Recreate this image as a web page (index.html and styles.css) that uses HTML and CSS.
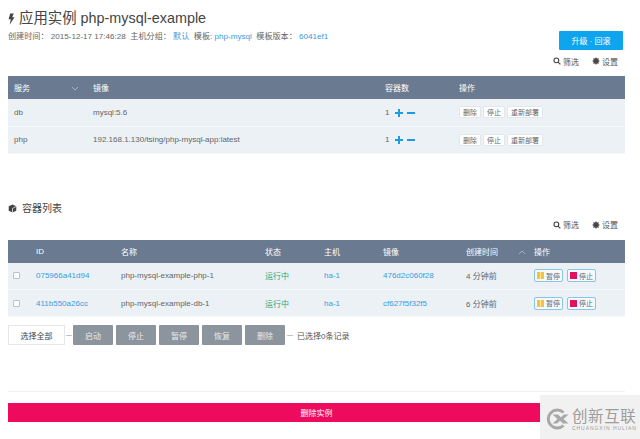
FILE: index.html
```html
<!DOCTYPE html>
<html lang="en">
<head>
    <meta charset="UTF-8">
    <title>应用实例 php-mysql-example</title>
    <link rel="stylesheet" href="styles.css">
</head>
<body>
    <div class="page">
        <div class="head">
            <div>
                <h1 class="title">
                    <svg class="bolt" viewBox="0 0 7 12"><path d="M2.2 0.5h3.6L4.2 4.3h2.3L1.6 11.8l1.2-5.6H0.6z"/></svg>
                    应用实例 php-mysql-example
                </h1>
                <p class="meta">创建时间： 2015-12-17 17:46:28&nbsp; 主机分组： <a>默认</a>&nbsp; 模板: <a>php-mysql</a>&nbsp; 模板版本： <a>6041ef1</a></p>
            </div>
            <button class="upgrade">升级 · 回滚</button>
        </div>

        <div class="tools tools-first">
            <span class="tool"><svg viewBox="0 0 10 10"><circle cx="4.2" cy="4.2" r="3" /><path d="M6.4 6.4L9.2 9.2"/></svg>筛选</span>
            <span class="tool"><svg viewBox="0 0 10 10"><circle cx="5" cy="5" r="2.6" class="gear"/><path d="M5 .6v2M5 7.4v2M.6 5h2M7.4 5h2M1.9 1.9l1.4 1.4M6.7 6.7l1.4 1.4M1.9 8.1l1.4-1.4M6.7 3.3l1.4-1.4"/></svg>设置</span>
        </div>

        <table class="grid services">
            <thead>
                <tr>
                    <th class="c-svc">服务<svg class="chev" viewBox="0 0 10 6"><path d="M1 1l4 4 4-4"/></svg></th>
                    <th class="c-img">镜像</th>
                    <th class="c-num">容器数</th>
                    <th>操作</th>
                </tr>
            </thead>
            <tbody>
                <tr>
                    <td>db</td>
                    <td>mysql:5.6</td>
                    <td class="scale">1 <span class="pm plus"></span><span class="pm"></span></td>
                    <td><span class="mini">删除</span><span class="mini">停止</span><span class="mini">重新部署</span></td>
                </tr>
                <tr>
                    <td>php</td>
                    <td>192.168.1.130/tsing/php-mysql-app:latest</td>
                    <td class="scale">1 <span class="pm plus"></span><span class="pm"></span></td>
                    <td><span class="mini">删除</span><span class="mini">停止</span><span class="mini">重新部署</span></td>
                </tr>
            </tbody>
        </table>

        <h2 class="section">
            <svg class="cube" viewBox="0 0 10 10"><path d="M5 .5L9.2 2.6V7.4L5 9.5.8 7.4V2.6z"/><path class="cube-cut" d="M5 5L9.2 2.6M5 5V9.5"/></svg>
            容器列表
        </h2>

        <div class="tools">
            <span class="tool"><svg viewBox="0 0 10 10"><circle cx="4.2" cy="4.2" r="3" /><path d="M6.4 6.4L9.2 9.2"/></svg>筛选</span>
            <span class="tool"><svg viewBox="0 0 10 10"><circle cx="5" cy="5" r="2.6" class="gear"/><path d="M5 .6v2M5 7.4v2M.6 5h2M7.4 5h2M1.9 1.9l1.4 1.4M6.7 6.7l1.4 1.4M1.9 8.1l1.4-1.4M6.7 3.3l1.4-1.4"/></svg>设置</span>
        </div>

        <table class="grid containers">
            <thead>
                <tr>
                    <th class="k-check"></th>
                    <th class="k-id">ID</th>
                    <th class="k-name">名称</th>
                    <th class="k-state">状态</th>
                    <th class="k-host">主机</th>
                    <th class="k-img">镜像</th>
                    <th class="k-time">创建时间<svg class="chev" viewBox="0 0 10 6"><path d="M1 5l4-4 4 4"/></svg></th>
                    <th>操作</th>
                </tr>
            </thead>
            <tbody>
                <tr>
                    <td><span class="check"></span></td>
                    <td><a>075966a41d94</a></td>
                    <td>php-mysql-example-php-1</td>
                    <td class="running">运行中</td>
                    <td><a>ha-1</a></td>
                    <td><a>476d2c060f28</a></td>
                    <td>4 分钟前</td>
                    <td><span class="act"><i class="pause"></i>暂停</span><span class="act"><i class="stop"></i>停止</span></td>
                </tr>
                <tr>
                    <td><span class="check"></span></td>
                    <td><a>411b550a26cc</a></td>
                    <td>php-mysql-example-db-1</td>
                    <td class="running">运行中</td>
                    <td><a>ha-1</a></td>
                    <td><a>cf627f5f32f5</a></td>
                    <td>6 分钟前</td>
                    <td><span class="act"><i class="pause"></i>暂停</span><span class="act"><i class="stop"></i>停止</span></td>
                </tr>
            </tbody>
        </table>

        <div class="bulk">
            <button class="select-all">选择全部</button>
            <span class="dash">—</span>
            <button class="gray">启动</button>
            <button class="gray">停止</button>
            <button class="gray">暂停</button>
            <button class="gray">恢复</button>
            <button class="gray">删除</button>
            <span class="dash">—</span>
            <span class="count">已选择0条记录</span>
        </div>

        <div class="danger-wrap">
            <button class="danger">删除实例</button>
        </div>
    </div>

    <div class="mark">
        <svg class="mark-logo" viewBox="0 0 26 22"><path d="M20 4.5A9 9 0 1 0 20 17.5" /><path d="M9 6.5l5 4.5-5 4.5h4.5l3-2.8 3 2.8H25l-5-4.5 5-4.5h-4.5l-3 2.8-3-2.8z" class="mark-x"/></svg>
        <div class="mark-text">
            <span class="mark-cn">创新互联</span>
            <span class="mark-en">CHUANGXIN HULIAN</span>
        </div>
    </div>
</body>
</html>
```

FILE: styles.css
```css
* {
    box-sizing: border-box;
}
body {
    margin: 0;
    background: #FFFFFF;
    color: #555;
    font-family: "Liberation Sans", "Noto Sans CJK SC", sans-serif;
    font-size: 8px;
    height: 439px;
    overflow: hidden;
    position: relative;
}
a {
    color: #3C9BDC;
}
button {
    font-family: inherit;
    border: none;
}
.page {
    padding: 10px 15px 0 8px;
}
.head {
    display: flex;
    justify-content: space-between;
    align-items: flex-start;
}
.title {
    margin: 0;
    font-size: 14.4px;
    line-height: 17px;
    font-weight: 400;
    color: #444;
    display: flex;
    align-items: center;
    gap: 4px;
}
.bolt {
    width: 7px;
    height: 12px;
    fill: #444;
}
.meta {
    margin: 4px 0 0;
    font-size: 8.1px;
    line-height: 11px;
    color: #666;
}
.upgrade {
    margin: 21px 2px 0 0;
    width: 64px;
    height: 19px;
    background: #0EA5EE;
    color: #fff;
    font-size: 8px;
    border-radius: 1px;
}
.tools {
    display: flex;
    justify-content: flex-end;
    gap: 13px;
    height: 14px;
    align-items: center;
    padding-right: 7px;
    font-size: 8px;
    color: #555;
}
.tools-first {
    margin-top: 4px;
    margin-bottom: 8px;
}
.tool {
    display: flex;
    align-items: center;
    gap: 2px;
}
.tool svg {
    width: 8px;
    height: 8px;
    fill: none;
    stroke: #444;
    stroke-width: 1.4;
}
.tool .gear {
    fill: #444;
}
.grid {
    width: 617px;
    border-collapse: collapse;
    table-layout: fixed;
    font-size: 8px;
}
.grid th {
    background: #6A7A90;
    color: #fff;
    height: 23px;
    padding: 0 0 0 6px;
    text-align: left;
    font-weight: 400;
    white-space: nowrap;
}
.grid td {
    background: #EBF1F5;
    height: 27px;
    padding: 0 0 0 6px;
    border-bottom: 1px solid #F6F8FA;
    white-space: nowrap;
    color: #666;
}
.chev {
    width: 8px;
    height: 5px;
    fill: none;
    stroke: #A9B7C6;
    stroke-width: 1.2;
    margin-left: 38px;
    vertical-align: middle;
}
.c-svc {
    width: 79px;
}
.c-svc .chev {
    margin-left: 41px;
}
.c-img {
    width: 292px;
}
.c-num {
    width: 74px;
}
.pm {
    display: inline-block;
    position: relative;
    width: 8px;
    height: 2px;
    margin-left: 4px;
    vertical-align: middle;
    background: #1E9BE0;
}
.pm.plus {
    margin-left: 3px;
}
.pm.plus::after {
    content: "";
    position: absolute;
    left: 3px;
    top: -3px;
    width: 2px;
    height: 8px;
    background: #1E9BE0;
}
.mini {
    display: inline-block;
    height: 12px;
    line-height: 11px;
    padding: 0 3px;
    margin-right: 2px;
    background: #fff;
    border: 1px solid #E2E7EB;
    border-radius: 1px;
    font-size: 7px;
    color: #666;
}
.section {
    margin: 48px 0 0;
    font-size: 10px;
    font-weight: 400;
    line-height: 14px;
    color: #444;
    display: flex;
    align-items: center;
    gap: 5px;
}
.cube {
    width: 9px;
    height: 9px;
    fill: #444;
}
.cube-cut {
    fill: none;
    stroke: #fff;
    stroke-width: 0.8;
}
.section + .tools {
    margin-top: 2px;
    margin-bottom: 8px;
}
.k-check {
    width: 22px;
}
.k-id {
    width: 85px;
}
.k-name {
    width: 144px;
}
.k-state {
    width: 59px;
}
.k-host {
    width: 59px;
}
.k-img {
    width: 83px;
}
.k-time {
    width: 68px;
}
.k-time .chev {
    margin-left: 20px;
}
.check {
    display: block;
    width: 7px;
    height: 7px;
    margin-left: -1px;
    background: #fff;
    border: 1px solid #B8C2CC;
    border-radius: 1px;
}
.running {
    color: #2FA87A !important;
}
.act {
    display: inline-flex;
    align-items: center;
    gap: 2px;
    height: 13px;
    padding: 0 2px;
    margin-right: 4px;
    background: #F4F9FC;
    border: 1px solid #8CC4E6;
    border-radius: 2px;
    font-size: 7px;
    color: #666;
}
.act i {
    display: block;
    width: 7px;
    height: 7px;
}
.pause {
    background: linear-gradient(to right, #F5C33B 0 3px, #FBE7AE 3px 4px, #F5C33B 4px);
}
.stop {
    background: #E0125F;
}
.bulk {
    margin-top: 8px;
    display: flex;
    align-items: center;
    height: 20px;
}
.bulk button {
    height: 20px;
    font-size: 8px;
}
.select-all {
    width: 57px;
    background: #fff;
    border: 1px solid #E4E7EA !important;
    color: #444;
}
.dash {
    width: 8px;
    text-align: center;
    font-size: 6px;
    color: #666;
}
.gray {
    width: 40px;
    margin-right: 3px;
    background: #8C949E;
    color: #E8EAEC;
    border-radius: 1px;
}
.gray:last-of-type {
    margin-right: 1px;
}
.count {
    margin-left: 3px;
    color: #555;
}
.danger-wrap {
    margin-top: 46px;
    border-top: 1px solid #F2F2F2;
    padding-top: 11px;
}
.danger {
    display: block;
    width: 100%;
    height: 19px;
    background: #EE0A5C;
    color: #fff;
    font-size: 8px;
}
.mark {
    position: absolute;
    left: 540px;
    top: 395px;
    width: 100px;
    height: 44px;
    background: #F1F1F1;
    display: flex;
    align-items: center;
    gap: 2px;
    padding: 4px 0 0 3px;
}
.mark-logo {
    width: 27px;
    height: 22px;
    fill: none;
    stroke: #A8A8A8;
    stroke-width: 3;
    flex: none;
}
.mark-x {
    fill: #A8A8A8;
    stroke: none;
}
.mark-text {
    display: flex;
    flex-direction: column;
    color: #9C9C9C;
}
.mark-cn {
    font-size: 15.5px;
    line-height: 17px;
    letter-spacing: 0.6px;
}
.mark-en {
    font-size: 5px;
    line-height: 6px;
    letter-spacing: 0.95px;
    white-space: nowrap;
}
```
